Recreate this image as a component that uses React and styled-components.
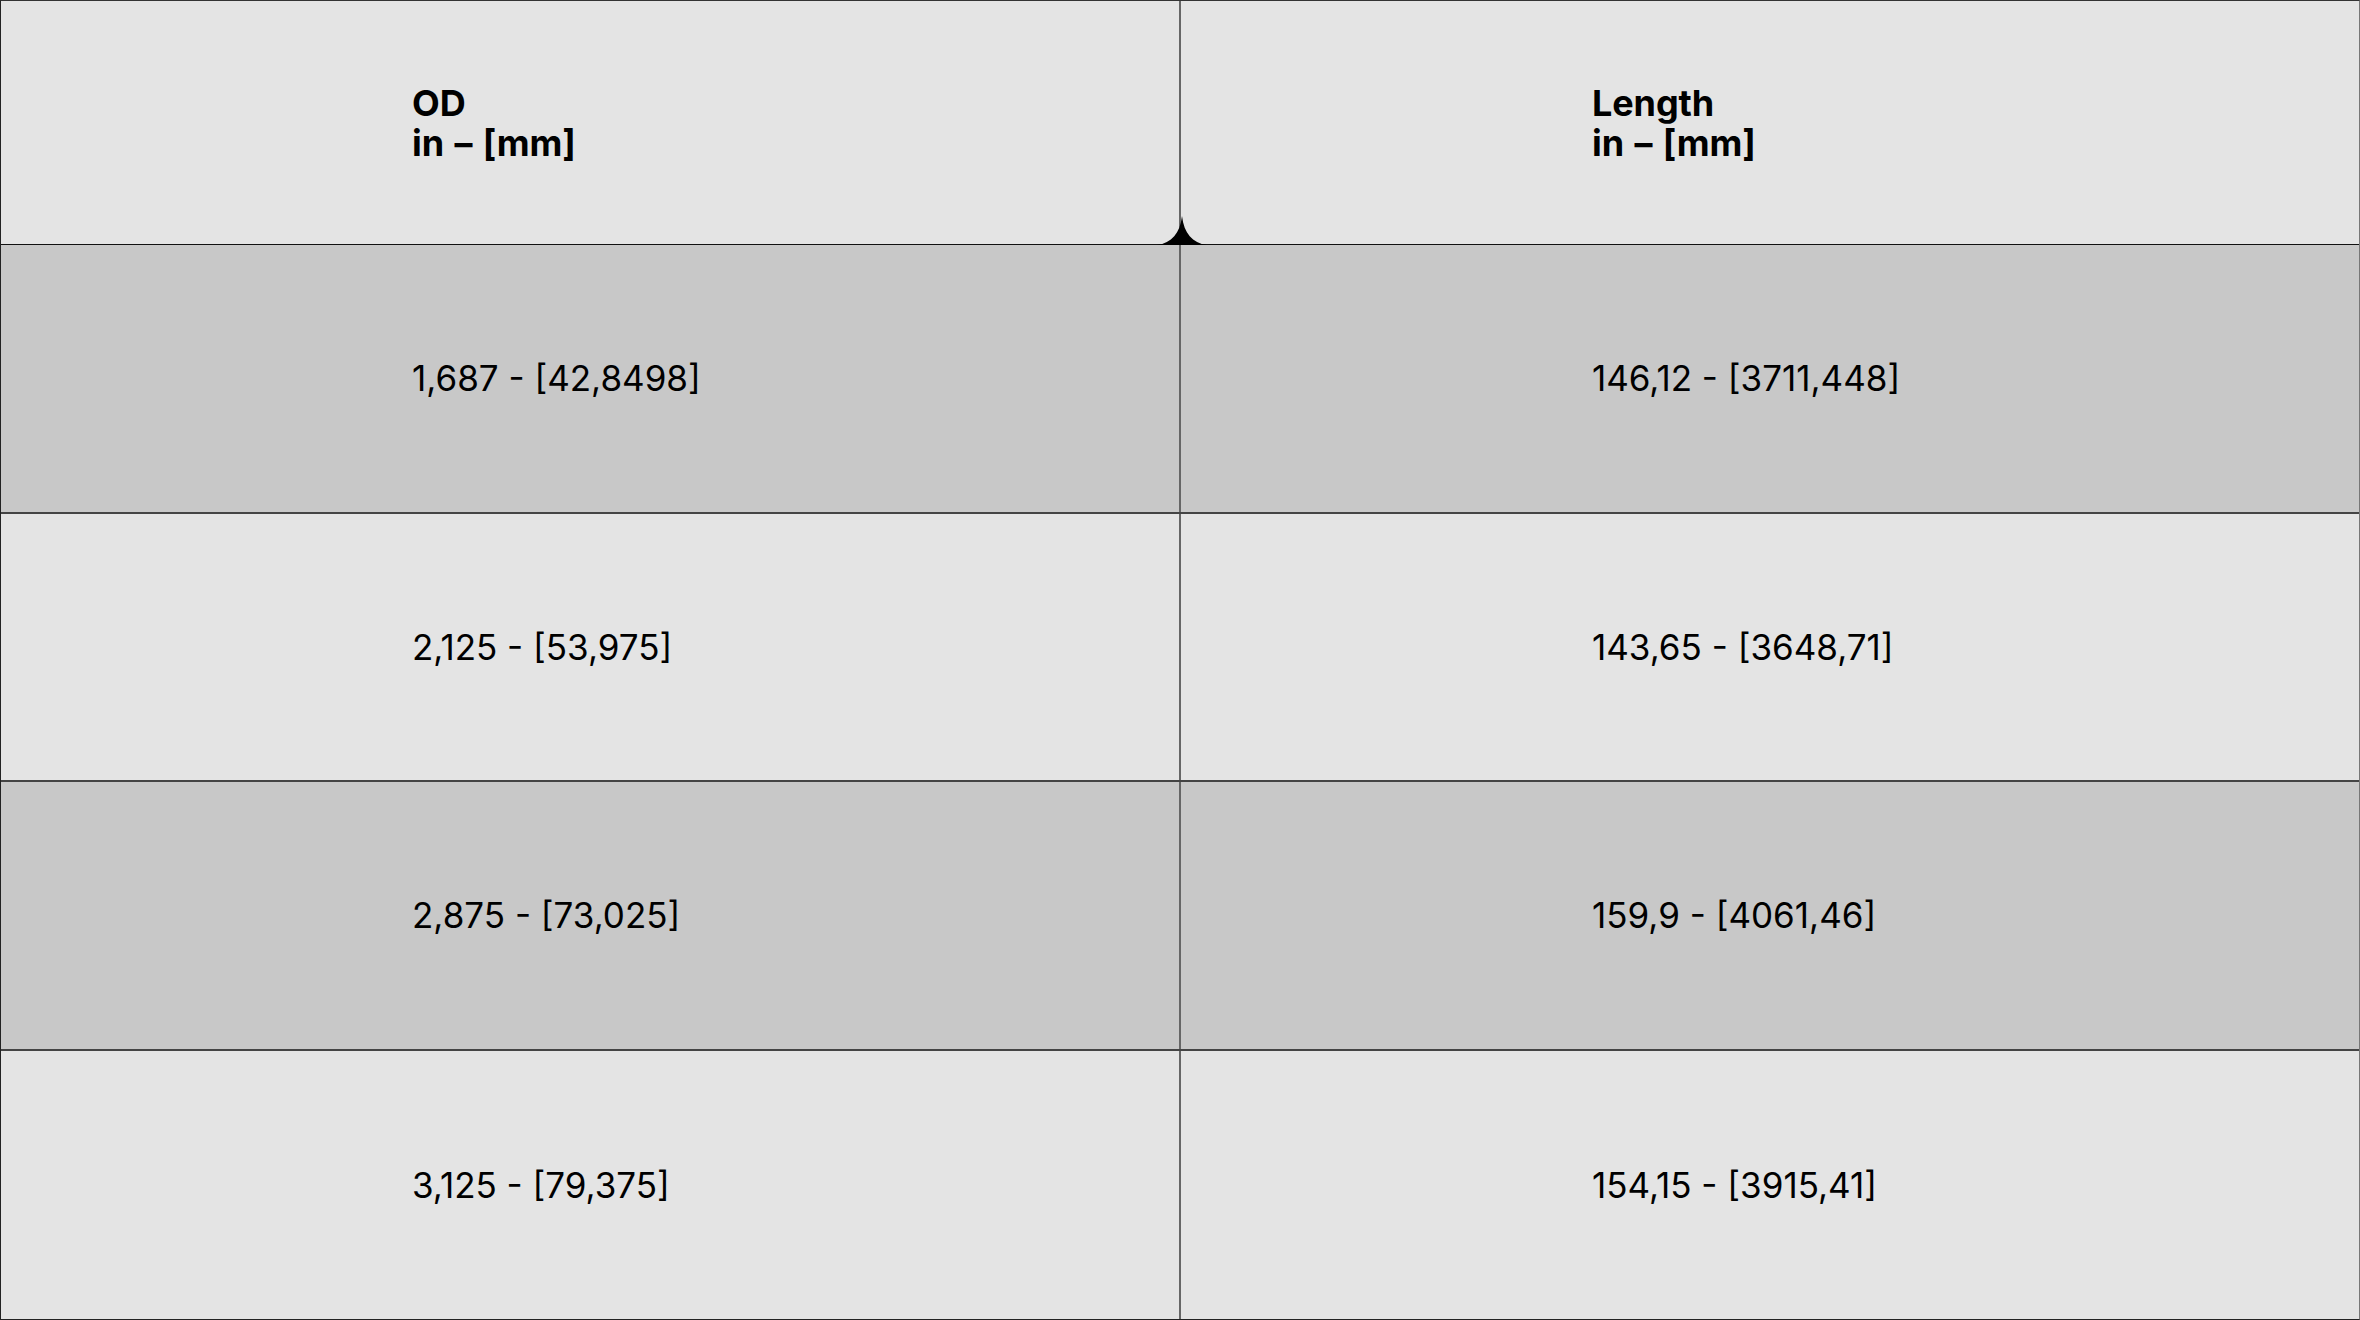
import React from "react";
import styled, { createGlobalStyle } from "styled-components";

const GlobalStyle = createGlobalStyle`
  html, body {
    margin: 0;
    padding: 0;
    background: #e4e4e4;
  }
  body {
    font-family: Inter, "Noto Sans", "Liberation Sans", sans-serif;
    color: #000;
  }
`;

const rows = [
  { od: "1,687 - [42,8498]", length: "146,12 - [3711,448]" },
  { od: "2,125 - [53,975]", length: "143,65 - [3648,71]" },
  { od: "2,875 - [73,025]", length: "159,9 - [4061,46]" },
  { od: "3,125 - [79,375]", length: "154,15 - [3915,41]" },
];

const SpecTable = () => {
  return (
    <Table>
      <HeaderRow>
        <HeadCell>
          <span>OD</span>
          <span>in – [mm]</span>
        </HeadCell>
        <HeadCell $last>
          <span>Length</span>
          <span>in – [mm]</span>
        </HeadCell>
        <Cusp viewBox="0 0 48 28" aria-hidden="true">
          <path d="M0 28 C14 26 22 17 24 0 C26 17 34 26 48 28 Z" fill="#000" />
        </Cusp>
      </HeaderRow>
      {rows.map((row, index) => (
        <Row key={index} $shade={index % 2 === 0} $last={index === rows.length - 1}>
          <Cell>{row.od}</Cell>
          <Cell $last>{row.length}</Cell>
        </Row>
      ))}
    </Table>
  );
};

export default function App() {
  return (
    <>
      <GlobalStyle />
      <SpecTable />
    </>
  );
}

const Table = styled.div`
  box-sizing: border-box;
  width: 100vw;
  height: 100vh;
  display: grid;
  grid-template-rows: 244px repeat(4, 1fr);
  border-left: 1px solid #222;
  border-top: 1px solid #333;
  border-right: 1px solid #777;
  border-bottom: 1px solid #222;
  overflow: hidden;
`;

const HeaderRow = styled.div`
  position: relative;
  display: grid;
  grid-template-columns: 1180px 1fr;
  background: #e4e4e4;
  border-bottom: 1px solid #111;
`;

const Row = styled.div`
  display: grid;
  grid-template-columns: 1180px 1fr;
  background: ${(p) => (p.$shade ? "#c8c8c8" : "#e4e4e4")};
  border-bottom: ${(p) => (p.$last ? "none" : "2px solid #444")};
`;

const HeadCell = styled.div`
  display: flex;
  flex-direction: column;
  justify-content: center;
  padding-left: 411px;
  padding-top: 1px;
  font-size: 36px;
  font-weight: 700;
  line-height: 40px;
  letter-spacing: -0.1px;
  word-spacing: 2px;
  border-right: ${(p) => (p.$last ? "none" : "2px solid #666")};
`;

const Cell = styled.div`
  display: flex;
  align-items: center;
  padding-left: 411px;
  font-size: 35px;
  font-weight: 400;
  letter-spacing: 0;
  border-right: ${(p) => (p.$last ? "none" : "2px solid #666")};
`;

const Cusp = styled.svg`
  position: absolute;
  left: 1156px;
  bottom: -1px;
  width: 50px;
  height: 29px;
`;
